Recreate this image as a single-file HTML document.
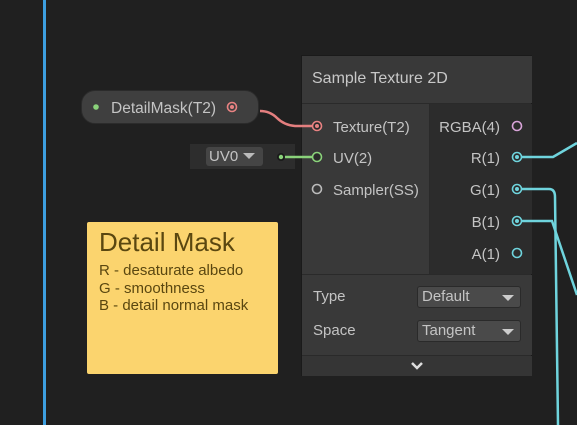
<!DOCTYPE html>
<html><head><style>
*{margin:0;padding:0;box-sizing:border-box}
body{width:577px;height:425px;background:#202020;position:relative;overflow:hidden;font-family:"Liberation Sans",sans-serif;color:#c4c4c4}
.a{position:absolute}
.t{font-size:15px;white-space:nowrap}
.r{position:absolute;right:77px;font-size:15px;white-space:nowrap;text-align:right}
</style></head><body>
<div class="a" style="left:43px;top:0;width:3px;height:425px;background:#3d9fe0"></div>

<div class="a" style="left:301px;top:55px;width:231px;height:321px;background:#2a2a2a;border:1px solid #1a1a1a"></div>
<div class="a" style="left:302px;top:56px;width:230px;height:47px;background:#393939"></div>
<div class="a t" style="left:312px;top:70px;font-size:16px;color:#c8c8c8">Sample Texture 2D</div>
<div class="a" style="left:302px;top:104px;width:127px;height:170px;background:#393939"></div>
<div class="a" style="left:430px;top:104px;width:102px;height:170px;background:#2c2c2c"></div>
<div class="a" style="left:302px;top:275px;width:230px;height:80px;background:#393939"></div>
<div class="a" style="left:302px;top:356px;width:230px;height:20px;background:#353535"></div>
<svg class="a" style="left:411px;top:361px" width="12" height="9"><path d="M1 2 L6 7 L11 2" stroke="#ddd" stroke-width="2.5" fill="none"/></svg>

<div class="a t" style="left:333px;top:119px">Texture(T2)</div>
<div class="a t" style="left:333px;top:150px">UV(2)</div>
<div class="a t" style="left:333px;top:182px">Sampler(SS)</div>
<div class="r" style="top:119px">RGBA(4)</div>
<div class="r" style="top:150px">R(1)</div>
<div class="r" style="top:182px">G(1)</div>
<div class="r" style="top:214px">B(1)</div>
<div class="r" style="top:246px">A(1)</div>

<div class="a t" style="left:313px;top:288px">Type</div>
<div class="a t" style="left:313px;top:322px">Space</div>
<div class="a" style="left:417px;top:286px;width:104px;height:22px;background:#4a4a4a;border-radius:3px;border:1px solid #2a2a2a"></div>
<div class="a t" style="left:422px;top:288px">Default</div>
<div class="a" style="left:417px;top:320px;width:104px;height:22px;background:#4a4a4a;border-radius:3px;border:1px solid #2a2a2a"></div>
<div class="a t" style="left:422px;top:322px">Tangent</div>

<div class="a" style="left:81px;top:90px;width:178px;height:34px;background:#3f3f3f;border-radius:14px;border:1px solid #2b2b2b"></div>
<div class="a t" style="left:111px;top:100px;font-size:15.5px">DetailMask(T2)</div>

<div class="a" style="left:190px;top:144px;width:105px;height:25px;background:#2d2d2d"></div>
<div class="a" style="left:206px;top:147px;width:57px;height:19px;background:#454545;border-radius:3px"></div>
<div class="a t" style="left:209px;top:148px;font-size:15px">UV0</div>

<div class="a" style="left:87px;top:222px;width:191px;height:152px;background:#fbd46e;border-radius:2px"></div>
<div class="a" style="left:99px;top:227px;font-size:26px;color:#5a4710;white-space:nowrap">Detail Mask</div>
<div class="a" style="left:99px;top:262px;font-size:15px;line-height:17.5px;color:#5a4710;white-space:nowrap">R - desaturate albedo<br>G - smoothness<br>B - detail normal mask</div>

<svg class="a" style="left:0;top:0" width="577" height="425">
<path d="M260 111 Q270 111 277 118 T295 126 L317 126" stroke="#e47f7f" stroke-width="2.5" fill="none"/>
<path d="M281 157 L317 157" stroke="#8ad27a" stroke-width="2.5" fill="none"/>
<path d="M517 157 L553 157 L577 143" stroke="#6fd4dd" stroke-width="2.5" fill="none"/>
<path d="M517 189 L549 189 Q555 189 555 197 L558 425" stroke="#6fd4dd" stroke-width="2.5" fill="none"/>
<path d="M517 221 L552 221 L577 295" stroke="#6fd4dd" stroke-width="2.5" fill="none"/>
<g fill="none" stroke-width="1.6">
<circle cx="317" cy="126" r="4.5" stroke="#e88282" fill="#2a2a2a"/><circle cx="317" cy="126" r="2" fill="#e88282" stroke="none"/>
<circle cx="317" cy="157" r="4.5" stroke="#8ad27a" fill="#2a2a2a"/>
<circle cx="317" cy="189" r="4.5" stroke="#bbb"/>
<circle cx="517" cy="126" r="4.5" stroke="#d9a4d9"/>
<circle cx="517" cy="157" r="4.5" stroke="#6fd4dd" fill="#2a2a2a"/><circle cx="517" cy="157" r="2" fill="#6fd4dd" stroke="none"/>
<circle cx="517" cy="189" r="4.5" stroke="#6fd4dd" fill="#2a2a2a"/><circle cx="517" cy="189" r="2" fill="#6fd4dd" stroke="none"/>
<circle cx="517" cy="221" r="4.5" stroke="#6fd4dd" fill="#2a2a2a"/><circle cx="517" cy="221" r="2" fill="#6fd4dd" stroke="none"/>
<circle cx="517" cy="253" r="4.5" stroke="#6fd4dd"/>
<circle cx="232" cy="107" r="4.5" stroke="#e88282"/><circle cx="232" cy="107" r="2" fill="#e88282" stroke="none"/>
<circle cx="281" cy="157" r="4" fill="#1a1a1a" stroke="none"/><circle cx="281" cy="157" r="2.2" fill="#8ad27a" stroke="none"/>
</g>
<circle cx="96" cy="107" r="2.8" fill="#8ad27a"/>
<path d="M243 153 L255 153 L249 159 Z" fill="#bbb"/>
<path d="M502 295 L514 295 L508 301 Z" fill="#ccc"/>
<path d="M502 329 L514 329 L508 335 Z" fill="#ccc"/>
</svg>
</body></html>
